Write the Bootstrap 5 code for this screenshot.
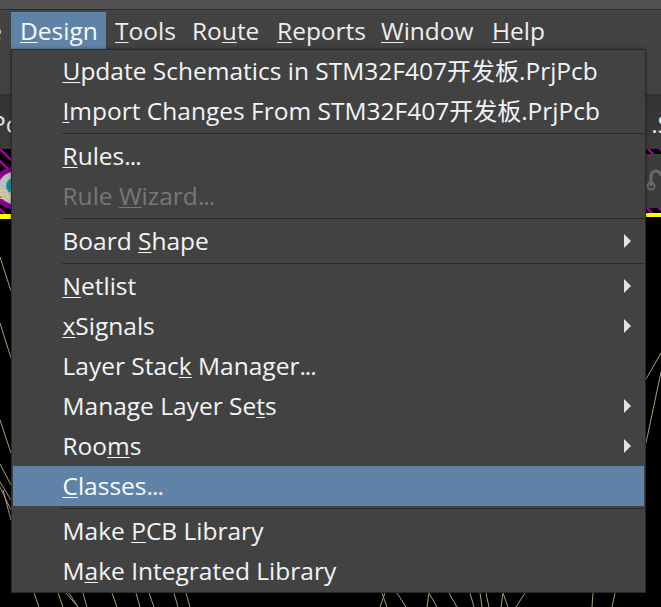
<!DOCTYPE html>
<html lang="en">
<head>
<meta charset="utf-8">
<title>Design menu</title>
<link href="https://cdn.jsdelivr.net/npm/bootstrap@5.3.0/dist/css/bootstrap.min.css" rel="stylesheet">
<style>
html,body{margin:0;background:#000;}
.app{position:relative;width:661px;height:607px;overflow:hidden;background:#000;font-family:"Open Sans","Noto Sans CJK SC",sans-serif;font-size:24.5px;color:#f2f4f6;}
.app u{text-decoration-thickness:1px;text-underline-offset:2px;}
.cjk{font-size:24px;}
.dots{letter-spacing:-1px;}
.titlestrip{height:10px;background:#505050;border-bottom:1px solid #2e2e2e;}
.menubar{height:39px;background:#424242;}
.mb-item{margin-top:2px;height:37px;line-height:38px;white-space:nowrap;color:#eceef0;padding-left:9px;flex:none;}
.mb-e{width:11px;padding:0 9px 0 0;display:flex;justify-content:flex-end;}
.mb-design{width:95px;background:#5f83a6;color:#f7fafd;}
.mb-tools{width:77px;}
.mb-route{width:85px;}
.mb-reports{width:104px;}
.mb-window{width:111px;}
.gapstrip{height:45px;background:#424242;}
.tabstrip{height:55px;background:linear-gradient(#333,#3c3c3c);overflow:hidden;}
.tabfrag{padding-top:13px;color:#dce6ef;line-height:34px;flex:none;}
.frag-left{margin-left:-9px;}
.frag-right{margin-right:-10px;}
.board{position:absolute;left:0;top:149px;width:661px;height:458px;}
.pcbmenu.dropdown-menu{position:absolute;display:block;left:11px;top:49px;width:635px;height:544px;padding:1px 1px 1px;margin:0;background:#424242;border:1px solid #2a2a2a;border-radius:0;font-size:24.5px;box-shadow:0 0 3px rgba(0,0,0,.4);}
.pcbmenu .dropdown-item{height:40px;line-height:40px;padding:0 0 0 49.5px;display:flex;justify-content:space-between;color:#f2f4f6;white-space:nowrap;}
.pcbmenu .dropdown-item.disabled{color:#777;}
.pcbmenu .dropdown-item.now{background:#5f83a6;color:#f9fbfe;}
.pcbmenu .dropdown-divider{height:1px;margin:2px -1px 2px 49px;border:0;border-top:1px solid #2a2a2a;opacity:1;background:none;}
.sub::after{content:"";align-self:center;margin-right:13px;border-left:7px solid #e2e2e2;border-top:7px solid transparent;border-bottom:7px solid transparent;}
</style>
</head>
<body>
<div class="app">
  <div class="titlestrip"></div>
  <nav class="menubar d-flex">
    <span class="mb-item mb-e">e</span>
    <span class="mb-item mb-design"><u>D</u>esign</span>
    <span class="mb-item mb-tools"><u>T</u>ools</span>
    <span class="mb-item mb-route">Ro<u>u</u>te</span>
    <span class="mb-item mb-reports"><u>R</u>eports</span>
    <span class="mb-item mb-window"><u>W</u>indow</span>
    <span class="mb-item"><u>H</u>elp</span>
  </nav>
  <div class="gapstrip"></div>
  <div class="tabstrip d-flex justify-content-between">
    <span class="tabfrag frag-left">Pc</span>
    <span class="tabfrag frag-right">.S</span>
  </div>
  <svg class="board" viewBox="0 149 661 458" xmlns="http://www.w3.org/2000/svg" aria-hidden="true">
    <defs>
      <pattern id="hatch" width="12" height="12" patternUnits="userSpaceOnUse" patternTransform="translate(0 149)">
        <rect width="12" height="12" fill="#000"/>
        <path d="M-3 -3L15 15M-3 9L3 15M9 -3L15 3" stroke="#b000b0" stroke-width="2"/>
      </pattern>
    </defs>
    <rect x="0" y="149" width="12" height="65" fill="url(#hatch)"/>
    <circle cx="14" cy="188" r="21" fill="#8a008a"/>
    <circle cx="14" cy="188" r="16" fill="#bdbdbd"/>
    <circle cx="14" cy="186" r="8" fill="#12908c"/>
    <text x="-2" y="199" font-size="12" fill="#e6d27a" font-family="Open Sans">EV</text>
    <rect x="0" y="214" width="12" height="5" fill="#ff0"/>
    <rect x="646" y="149" width="15" height="5" fill="url(#hatch)"/>
    <rect x="646" y="154" width="15" height="54" fill="#3c3c3c"/>
    <path d="M651 186V176a5 5 0 0 1 10 0" fill="none" stroke="#6a6a6a" stroke-width="3"/>
    <circle cx="651" cy="186" r="3.5" fill="none" stroke="#6a6a6a" stroke-width="2"/>
    <rect x="646" y="208" width="15" height="6" fill="url(#hatch)"/>
    <rect x="646" y="213" width="15" height="4" fill="#ff0"/>
    <g stroke="#a3a37a" stroke-width="1" fill="none">
      <path d="M0 257L11 291M0 323L11 358M0 420L11 453M0 464L11 485M0 482L11 500M0 487L11 510M3 490L11 520"/>
      <path d="M646 379L661 353M646 443L661 372"/>
      <path d="M34 593L39 607M58 593L63 607M66 593L78 607M69 593L78 607M83 593L87 607M112 593L117 607M136 593L140 607M149 593L154 607M174 593L178 607M186 593L190 607"/>
      <path d="M385 593L380 607M382 593L387 607M397 593L406 607M429 593L427 607M429 593L437 607M449 593L457 607M470 593L474 607M480 593L482 607M486 593L489 607M503 593L501 607M503 593L508 607M525 593L516 607M593 593L592 607M615 593L612 607"/>
    </g>
  </svg>
  <div class="dropdown-menu pcbmenu show">
    <a class="dropdown-item" href="#"><span><u>U</u>pdate Schematics in STM32F407<span class="cjk">开发板</span>.PrjPcb</span></a>
    <a class="dropdown-item" href="#"><span><u>I</u>mport Changes From STM32F407<span class="cjk">开发板</span>.PrjPcb</span></a>
    <hr class="dropdown-divider">
    <a class="dropdown-item" href="#"><span><u>R</u>ules<span class="dots">...</span></span></a>
    <a class="dropdown-item disabled" href="#"><span>Rule <u>W</u>izard<span class="dots">...</span></span></a>
    <hr class="dropdown-divider">
    <a class="dropdown-item sub" href="#"><span>Board <u>S</u>hape</span></a>
    <hr class="dropdown-divider">
    <a class="dropdown-item sub" href="#"><span><u>N</u>etlist</span></a>
    <a class="dropdown-item sub" href="#"><span><u>x</u>Signals</span></a>
    <a class="dropdown-item" href="#"><span>Layer Stac<u>k</u> Manager<span class="dots">...</span></span></a>
    <a class="dropdown-item sub" href="#"><span>Manage Layer Se<u>t</u>s</span></a>
    <a class="dropdown-item sub" href="#"><span>Roo<u>m</u>s</span></a>
    <a class="dropdown-item now" href="#"><span><u>C</u>lasses<span class="dots">...</span></span></a>
    <hr class="dropdown-divider">
    <a class="dropdown-item" href="#"><span>Make <u>P</u>CB Library</span></a>
    <a class="dropdown-item" href="#"><span>M<u>a</u>ke Integrated Library</span></a>
  </div>
</div>
<script src="https://cdn.jsdelivr.net/npm/bootstrap@5.3.0/dist/js/bootstrap.bundle.min.js"></script>
</body>
</html>
